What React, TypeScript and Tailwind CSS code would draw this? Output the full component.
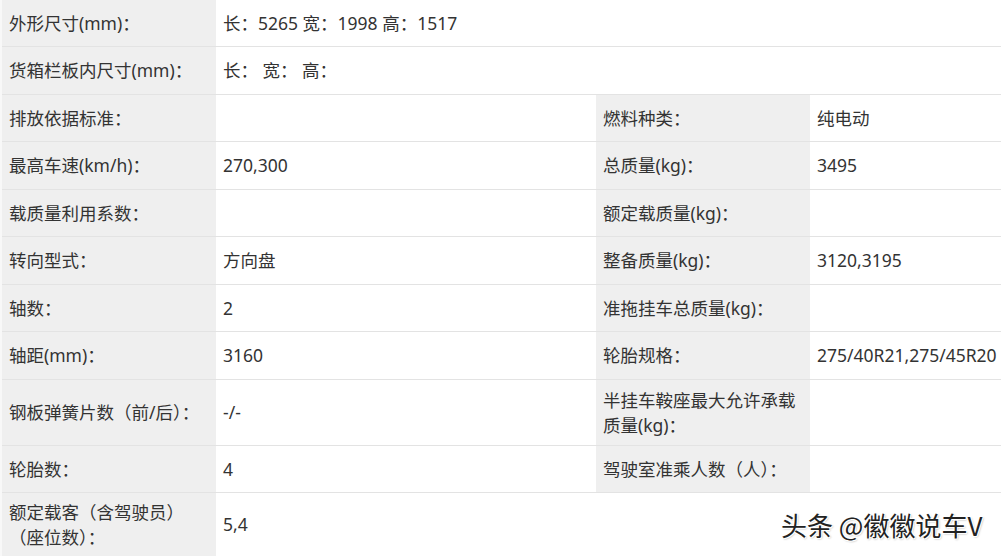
import React from 'react';

type Row = {
  h: string;
  label: React.ReactNode;
  value?: React.ReactNode;
  label2?: React.ReactNode;
  value2?: React.ReactNode;
  wide?: boolean;
};

const rows: Row[] = [
  { h: 'h-[47px]', label: '外形尺寸(mm)：', value: '长：5265 宽：1998 高：1517', wide: true },
  { h: 'h-[48px]', label: '货箱栏板内尺寸(mm)：', value: '长：  宽：  高：', wide: true },
  { h: 'h-[47px]', label: '排放依据标准：', value: '', label2: '燃料种类：', value2: '纯电动' },
  { h: 'h-[48px]', label: '最高车速(km/h)：', value: '270,300', label2: '总质量(kg)：', value2: '3495' },
  { h: 'h-[47px]', label: '载质量利用系数：', value: '', label2: '额定载质量(kg)：', value2: '' },
  { h: 'h-[48px]', label: '转向型式：', value: '方向盘', label2: '整备质量(kg)：', value2: '3120,3195' },
  { h: 'h-[47px]', label: '轴数：', value: '2', label2: '准拖挂车总质量(kg)：', value2: '' },
  { h: 'h-[48px]', label: '轴距(mm)：', value: '3160', label2: '轮胎规格：', value2: '275/40R21,275/45R20' },
  {
    h: 'h-[66px]',
    label: '钢板弹簧片数（前/后）：',
    value: '-/-',
    label2: (
      <>
        半挂车鞍座最大允许承载
        <br />
        质量(kg)：
      </>
    ),
    value2: '',
  },
  { h: 'h-[47px]', label: '轮胎数：', value: '4', label2: '驾驶室准乘人数（人）：', value2: '' },
];

const cell = 'flex items-center pl-[7px] whitespace-nowrap border-b border-[#e3e3e3]';

export default function App() {
  return (
    <div
      className="relative w-[1001px] h-[556px] overflow-hidden bg-white text-[#333] text-[17.5px] leading-[25px]"
      style={{ fontFamily: '"Noto Sans", "Noto Sans CJK SC", sans-serif' }}
    >
      <div className="border-l-2 border-[#f8f8f8]">
        {rows.map((r, i) => (
          <div key={i} className={`grid grid-cols-[214px_380px_214px_191px] ${r.h}`}>
            <div className={`${cell} bg-[#efefef]`}>{r.label}</div>
            {r.wide ? (
              <div className={`${cell} col-span-3`}>{r.value}</div>
            ) : (
              <>
                <div className={cell}>{r.value}</div>
                <div className={`${cell} bg-[#efefef]`}>{r.label2}</div>
                <div className={cell}>{r.value2}</div>
              </>
            )}
          </div>
        ))}
        {/* last row is cut off by the screenshot */}
        <div className="grid grid-cols-[214px_787px] h-[63px]">
          <div className="flex items-center pl-[7px] bg-[#efefef]">
            <div>
              额定载客（含驾驶员）
              <br />
              （座位数）：
            </div>
          </div>
          <div className="flex items-center pl-[7px]">5,4</div>
        </div>
      </div>

      {/* watermark */}
      <div
        className="absolute left-[781px] top-[507px] text-[26px] leading-[36px] text-[#222] whitespace-nowrap"
        style={{
          fontFamily: '"Noto Sans CJK SC", sans-serif',
          textShadow: '1px 1px 0 #fff, -1px -1px 0 #fff, 1px -1px 0 #fff, -1px 1px 0 #fff, 1px 1px 2px #999',
        }}
      >
        头条 @徽徽说车V
      </div>
    </div>
  );
}
